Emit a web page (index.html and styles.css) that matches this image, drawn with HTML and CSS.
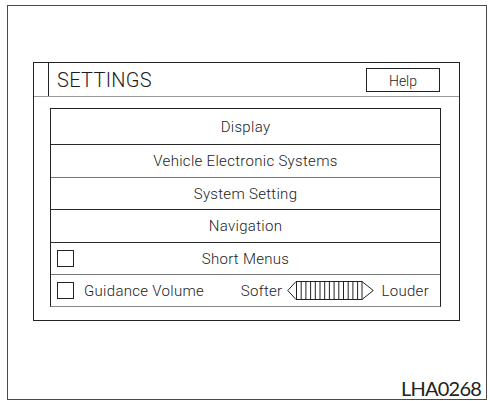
FILE: index.html
```html
<!DOCTYPE html>
<html>
<head>
<meta charset="utf-8">
<link rel="stylesheet" href="styles.css">
</head>
<body>
<div class="frame">
  <div class="panel">
    <div class="titlebar">
      <div class="tab"></div>
      <div class="title">SETTINGS</div>
      <div class="help">Help</div>
    </div>
    <div class="list">
      <div class="row r1">Display</div>
      <div class="row r2 light">Vehicle Electronic Systems</div>
      <div class="row r3">System Setting</div>
      <div class="row r4">Navigation</div>
      <div class="row r5 light check-row">
        <span class="box"></span>
        <span class="center">Short Menus</span>
        <span></span>
      </div>
      <div class="row r6 vol-row">
        <span class="box"></span>
        <span class="vol-label">Guidance Volume</span>
        <span class="softer">Softer</span>
        <svg class="slider" width="87" height="19" viewBox="0 0 87 19">
          <polygon points="0.8,9.5 9,0.5 75,0.5 86.3,9.5 75,18.5 9,18.5" fill="none" stroke="#222" stroke-width="1"/>
          <g stroke="#222" stroke-width="1">
            <line x1="9.5" y1="0.5" x2="9.5" y2="18.5"/>
            <line x1="14.2" y1="0.5" x2="14.2" y2="18.5"/>
            <line x1="18.9" y1="0.5" x2="18.9" y2="18.5"/>
            <line x1="23.6" y1="0.5" x2="23.6" y2="18.5"/>
            <line x1="28.3" y1="0.5" x2="28.3" y2="18.5"/>
            <line x1="33" y1="0.5" x2="33" y2="18.5"/>
            <line x1="37.7" y1="0.5" x2="37.7" y2="18.5"/>
            <line x1="42.4" y1="0.5" x2="42.4" y2="18.5"/>
            <line x1="47.1" y1="0.5" x2="47.1" y2="18.5"/>
            <line x1="51.8" y1="0.5" x2="51.8" y2="18.5"/>
            <line x1="56.5" y1="0.5" x2="56.5" y2="18.5"/>
            <line x1="61.2" y1="0.5" x2="61.2" y2="18.5"/>
            <line x1="65.9" y1="0.5" x2="65.9" y2="18.5"/>
            <line x1="70.6" y1="0.5" x2="70.6" y2="18.5"/>
            <line x1="75" y1="0.5" x2="75" y2="18.5"/>
          </g>
        </svg>
        <span class="louder">Louder</span>
      </div>
    </div>
  </div>
  <div class="code">LHA0268</div>
</div>
</body>
</html>
```

FILE: styles.css
```css
html, body {
  margin: 0;
  padding: 0;
  background: #ffffff;
}

body {
  font-family: Roboto, "Liberation Sans", Arial, sans-serif;
  font-weight: 300;
  color: #1c1c1c;
}

.frame {
  box-sizing: border-box;
  margin: 5px 0 0 7px;
  width: 480px;
  height: 395px;
  border: 1px solid #4a4a4a;
  display: flex;
  flex-direction: column;
}

.panel {
  box-sizing: border-box;
  margin: 56px 0 0 25px;
  width: 427px;
  height: 259px;
  border: 1px solid #222;
}

.titlebar {
  box-sizing: border-box;
  height: 34px;
  border-bottom: 1px solid #9a9a9a;
  display: flex;
  align-items: center;
}

.tab {
  box-sizing: border-box;
  width: 15px;
  height: 100%;
  border-right: 1px solid #222;
}

.title {
  padding-left: 8px;
  font-size: 20px;
  letter-spacing: 0.3px;
}

.help {
  box-sizing: border-box;
  align-self: flex-start;
  margin: 5px 19px 0 auto;
  width: 74px;
  height: 24px;
  border: 1px solid #222;
  font-size: 14px;
  display: flex;
  align-items: center;
  justify-content: center;
  padding-top: 1px;
}

.list {
  box-sizing: border-box;
  margin: 11px 0 0 16px;
  width: 391px;
  height: 199px;
  border: 1px solid #222;
  border-bottom-color: #888;
  display: flex;
  flex-direction: column;
}

.row {
  box-sizing: border-box;
  border-bottom: 1px solid #2a2a2a;
  font-size: 15px;
  letter-spacing: 0.3px;
  display: flex;
  align-items: center;
  justify-content: center;
}

.row.light {
  border-bottom-color: #777;
}

.r1 { height: 36px; }
.r2 { height: 33px; }
.r3 { height: 32px; }
.r4 { height: 33px; }
.r5 { height: 32px; }
.r6 { height: 31px; border-bottom: none; }

.box {
  box-sizing: border-box;
  display: block;
  width: 17px;
  height: 17px;
  border: 1px solid #222;
}

.check-row {
  display: grid;
  grid-template-columns: 1fr auto 1fr;
  justify-content: stretch;
  padding-left: 6px;
  padding-right: 6px;
}

.check-row .box {
  justify-self: start;
}

.vol-row {
  justify-content: flex-start;
  padding-left: 6px;
  padding-right: 11px;
}

.vol-label {
  margin-left: 10px;
}

.softer {
  margin-left: auto;
}

.slider {
  display: block;
  margin: 0 7px 0 5px;
}

.code {
  margin-top: auto;
  align-self: flex-end;
  margin-right: 5px;
  margin-bottom: 1px;
  font-family: Lato, "Open Sans", sans-serif;
  font-weight: 400;
  font-size: 20px;
  letter-spacing: -0.8px;
  line-height: 20px;
  color: #222;
}
```
